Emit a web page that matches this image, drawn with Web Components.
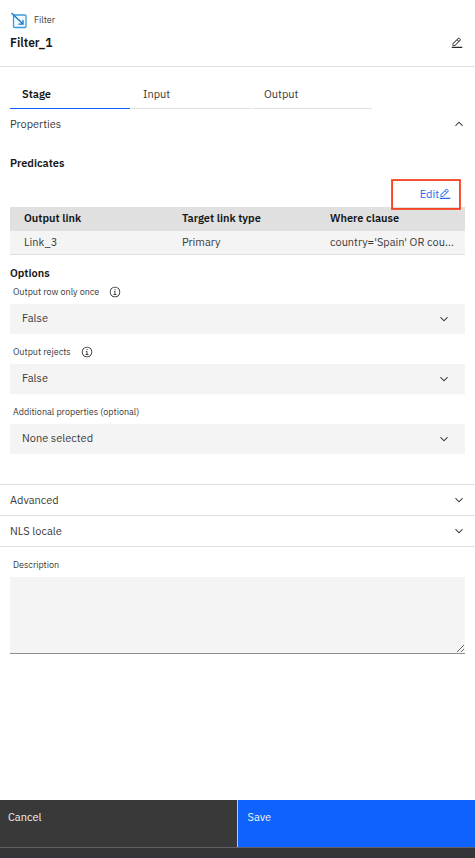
<!DOCTYPE html>
<html lang="en">
<head>
<meta charset="utf-8">
<meta name="viewport" content="width=device-width, initial-scale=1">
<title>Filter_1</title>
<style>
  body { margin: 0; background: #fff; color: #393939; font: 11px/16px "IBM Plex Sans", "Noto Sans", sans-serif; }
</style>
</head>
<body>
<stage-panel>
  <stage-header kind="Filter" name="Filter_1"></stage-header>
  <stage-tabs>
    <tab-item selected>Stage</tab-item>
    <tab-item>Input</tab-item>
    <tab-item>Output</tab-item>
  </stage-tabs>
  <accordion-section label="Properties" open>
    <predicate-table></predicate-table>
    <option-group heading="Options">
      <option-select label="Output row only once" value="False" info></option-select>
      <option-select label="Output rejects" value="False" info></option-select>
      <option-select label="Additional properties (optional)" value="None selected"></option-select>
    </option-group>
  </accordion-section>
  <accordion-section label="Advanced"></accordion-section>
  <accordion-section label="NLS locale"></accordion-section>
  <description-field label="Description"></description-field>
  <action-bar slot="footer"></action-bar>
</stage-panel>

<script>
const RESET = `*, *::before, *::after { box-sizing: border-box; }
  button, select, textarea { margin: 0; border: 0; border-radius: 0; padding: 0; background: none; color: inherit; font: inherit; text-align: left; }
  svg { display: block; flex: none; fill: currentColor; }`;

const ICONS = {
  edit: '<path d="M2 26h28v3H2zM25.400 9c.8-.8.8-2 0-2.800l-3.600-3.600c-.8-.8-2-.8-2.800 0l-15 15V24h6.400l15-15zm-5-5L24 7.600l-3 3L17.400 7l3-3zM6 22v-3.600l10-10 3.600 3.600-10 10H6z"/>',
  down: '<path d="M16 22 6 12l1.400-1.400 8.600 8.600 8.600-8.600L26 12z" stroke="currentColor" stroke-width=".4"/>',
  up: '<path d="m16 10 10 10-1.400 1.400-8.600-8.600-8.600 8.600L6 20z" stroke="currentColor" stroke-width=".4"/>',
  info: '<path d="M17 22v-8h-4v2h2v6h-3v2h8v-2zM16 8a1.500 1.500 0 1 0 1.500 1.500A1.500 1.500 0 0 0 16 8z"/><path d="M16 30a14 14 0 1 1 14-14 14 14 0 0 1-14 14zm0-26a12 12 0 1 0 12 12A12 12 0 0 0 16 4z"/>'
};
const icon = (name, size) =>
  `<svg width="${size}" height="${size}" viewBox="0 0 32 32" aria-hidden="true">${ICONS[name]}</svg>`;

class Part extends HTMLElement {
  connectedCallback() {
    if (this.shadowRoot) return;
    this.attachShadow({ mode: 'open' }).innerHTML = `<style>${RESET}${this.styles()}</style>${this.markup()}`;
  }
  attr(name) { return this.getAttribute(name) || ''; }
}

customElements.define('stage-panel', class extends Part {
  styles() { return `
    :host { display: flex; flex-direction: column; min-height: 100vh; }
    main { flex: 1; padding-bottom: 24px; }`; }
  markup() { return `<main><slot></slot></main><slot name="footer"></slot>`; }
});

customElements.define('stage-header', class extends Part {
  styles() { return `
    :host { display: block; padding: 11px 10px 14px; border-bottom: 1px solid #e0e0e0; }
    .kind { display: flex; align-items: center; gap: 6px; font-size: 9px; line-height: 18px; }
    .name { display: flex; align-items: center; justify-content: space-between; padding-top: 5px; }
    h1 { margin: 0; color: #161616; font-size: 12px; line-height: 18px; font-weight: 600; }
    .name button { padding: 0 2px; color: #262626; }`; }
  markup() { return `
    <div class="kind">
      <svg width="18" height="18" viewBox="0 0 18 18" aria-hidden="true">
        <rect x="3.500" y="4" width="12.500" height="12.500" rx="1" fill="#f3f9fe" stroke="#3a9adb" stroke-width="1.300"/>
        <path d="M1.500 2 13 13M13 9v4.200H8.500" fill="none" stroke="#0f78c8" stroke-width="1.300"/>
      </svg>
      <span>${this.attr('kind')}</span>
    </div>
    <div class="name"><h1>${this.attr('name')}</h1><button type="button" aria-label="Rename">${icon('edit', 12)}</button></div>`; }
});

customElements.define('stage-tabs', class extends Part {
  styles() { return `
    :host { display: flex; gap: 1px; padding: 13px 10px 0; }
    ::slotted(*) { flex: 0 1 120px; }`; }
  markup() { return `<slot></slot>`; }
});

customElements.define('tab-item', class extends Part {
  styles() { return `
    :host { display: block; }
    button { display: block; width: 100%; height: 29px; padding: 0 12px; border-bottom: 1px solid #e0e0e0; }
    :host([selected]) button { border-bottom-color: #0f62fe; color: #161616; font-weight: 600; }`; }
  markup() { return `<button type="button" role="tab" aria-selected="${this.hasAttribute('selected')}"><slot></slot></button>`; }
});

customElements.define('accordion-section', class extends Part {
  styles() { return `
    :host { display: block; border-bottom: 1px solid #e0e0e0; }
    button { display: flex; align-items: center; justify-content: space-between; width: 100%; height: 30px; padding: 0 10px; }
    svg { color: #161616; }
    .body { padding: 16px 10px 30px; }`; }
  markup() {
    const open = this.hasAttribute('open');
    return `<button type="button" aria-expanded="${open}"><span>${this.attr('label')}</span>${icon(open ? 'up' : 'down', 12)}</button>
      ${open ? '<div class="body"><slot></slot></div>' : ''}`;
  }
});

customElements.define('predicate-table', class extends Part {
  styles() { return `
    :host { display: block; }
    h2 { margin: 0; color: #161616; font-size: 11px; line-height: 16px; font-weight: 600; }
    .tools { display: flex; justify-content: flex-end; padding: 8px 4px 0; }
    .frame { position: relative; display: flex; justify-content: flex-end; width: 70px; height: 31px; margin-bottom: -3px; padding: 0 8px 1px 0; border: 2px solid #fb4423; outline: 1px dotted #fd6a4e; outline-offset: -1px; }
    .frame button { display: flex; align-items: center; color: #2468f2; }
    table { width: 100%; border-collapse: separate; border-spacing: 0; table-layout: fixed; }
    th, td { height: 24px; padding: 0 0 2px 14px; line-height: 16px; text-align: left; white-space: nowrap; }
    th { background: #e0e0e0; color: #161616; font-weight: 600; }
    td { padding-bottom: 1px; background: #f4f4f4; border-bottom: 1px solid #e0e0e0; }
    .a { width: 158px; } .b { width: 148px; }`; }
  markup() { return `
    <h2 id="h">Predicates</h2>
    <div class="tools"><div class="frame"><button type="button"><span>Edit</span>${icon('edit', 12)}</button></div></div>
    <table aria-labelledby="h">
      <colgroup><col class="a"><col class="b"><col></colgroup>
      <thead><tr><th scope="col">Output link</th><th scope="col">Target link type</th><th scope="col">Where clause</th></tr></thead>
      <tbody><tr><td>Link_3</td><td>Primary</td><td>country='Spain' OR cou...</td></tr></tbody>
    </table>`; }
});

customElements.define('option-group', class extends Part {
  styles() { return `
    :host { display: block; padding-top: 10px; }
    h2 { margin: 0 0 3px; color: #161616; font-size: 11px; line-height: 16px; font-weight: 600; }
    .list { display: grid; gap: 10px; }`; }
  markup() { return `<h2>${this.attr('heading')}</h2><div class="list"><slot></slot></div>`; }
});

customElements.define('option-select', class extends Part {
  styles() { return `
    :host { display: block; }
    .label { display: flex; align-items: center; gap: 10px; height: 16px; margin-bottom: 4px; padding-left: 3px; font-size: 9px; }
    .field { display: grid; align-items: center; background: #f4f4f4; }
    .field > * { grid-area: 1 / 1; }
    select { appearance: none; width: 100%; height: 30px; padding: 0 40px 2px 12px; }
    svg { color: #161616; }
    .field svg { justify-self: end; margin-right: 15px; pointer-events: none; }`; }
  markup() { return `
    <div class="label"><label for="s">${this.attr('label')}</label>${this.hasAttribute('info') ? `<button type="button" aria-label="More information">${icon('info', 12)}</button>` : ''}</div>
    <div class="field"><select id="s"><option>${this.attr('value')}</option></select>${icon('down', 12)}</div>`; }
});

customElements.define('description-field', class extends Part {
  styles() { return `
    :host { display: block; padding: 10px 10px 0; }
    label { display: block; margin-bottom: 4px; padding-left: 3px; font-size: 9px; line-height: 16px; }
    textarea { display: block; width: 100%; height: 77px; padding: 8px 12px; background: #f4f4f4; border-bottom: 1px solid #8d8d8d; resize: vertical; }`; }
  markup() { return `<label for="t">${this.attr('label')}</label><textarea id="t"></textarea>`; }
});

customElements.define('action-bar', class extends Part {
  styles() { return `
    :host { display: block; padding-bottom: 10px; background: #353539; color: #f4f4f4; }
    .row { display: grid; grid-template-columns: 1fr 1fr; border-bottom: 1px solid #626266; }
    button { height: 47px; padding: 0 8px 14px; background: #393939; }
    .cancel { border-right: 1px solid #c6c6c6; }
    .save { padding-left: 10px; background: #0f62fe; }`; }
  markup() { return `<div class="row"><button type="button" class="cancel">Cancel</button><button type="button" class="save">Save</button></div>`; }
});
</script>
</body>
</html>
